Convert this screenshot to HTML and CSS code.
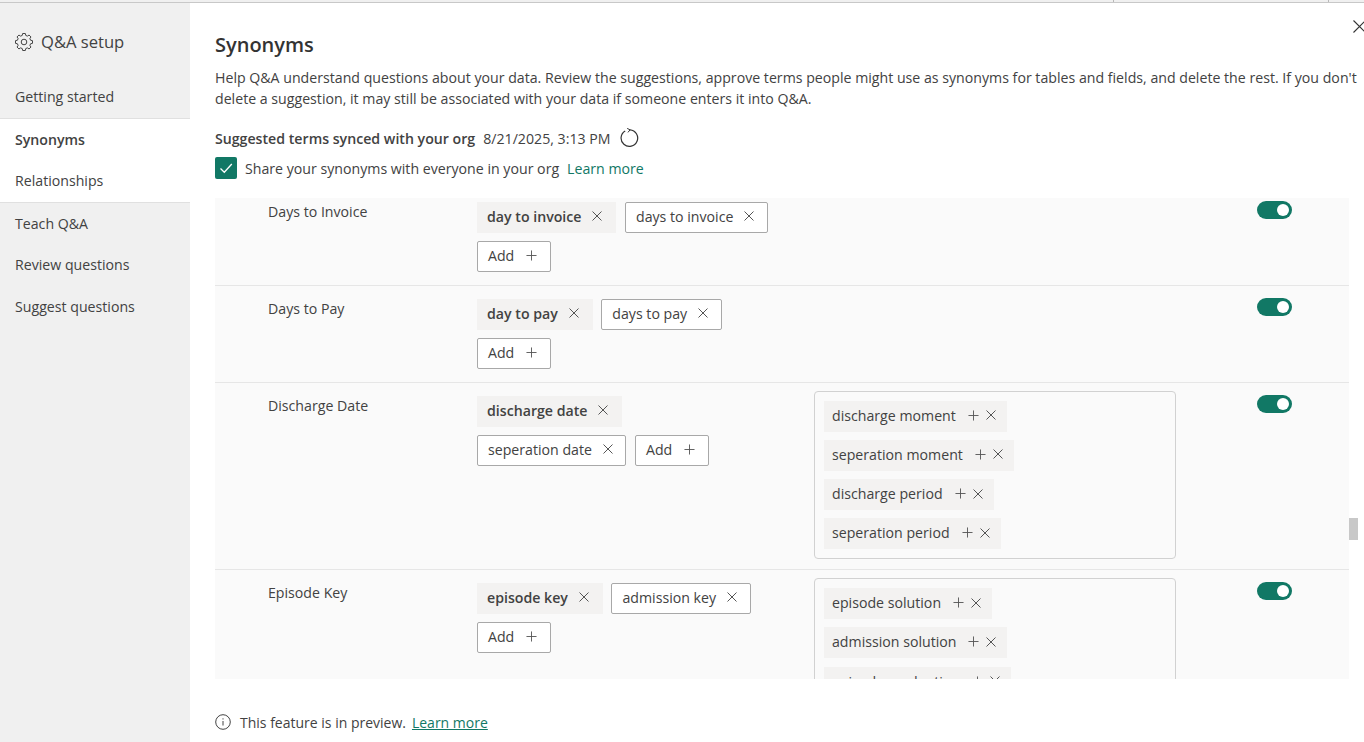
FILE: index.html
```html
<!DOCTYPE html>
<html lang="en">
<head>
<meta charset="utf-8">
<title>Q&amp;A setup</title>
<link rel="stylesheet" href="styles.css">
</head>
<body>
<div class="topstrip"></div>
<div class="app">
  <nav class="sidebar">
    <div class="side-head">
      <svg class="gear" viewBox="0 0 20 20" width="20" height="20" fill="none" stroke="#444" stroke-width="1"><path stroke-linejoin="round" d="M16.57 8.240L18.490 8.650V11.350L16.570 11.760L15.890 13.400L16.960 15.050L15.050 16.960L13.400 15.890L11.760 16.570L11.350 18.490H8.650L8.240 16.570L6.600 15.890L4.950 16.960L3.040 15.050L4.110 13.400L3.430 11.760L1.510 11.350V8.650L3.430 8.240L4.110 6.600L3.040 4.950L4.950 3.040L6.600 4.110L8.240 3.430L8.650 1.510H11.350L11.760 3.430L13.400 4.110L15.050 3.040L16.960 4.950L15.890 6.600Z"/><circle cx="10" cy="10" r="2.800"/></svg>
      <span class="side-title">Q&amp;A setup</span>
    </div>
    <a class="nav-item nav-first">Getting started</a>
    <div class="nav-active">
      <a class="nav-item nav-bold">Synonyms</a>
      <a class="nav-item">Relationships</a>
    </div>
    <a class="nav-item">Teach Q&amp;A</a>
    <a class="nav-item">Review questions</a>
    <a class="nav-item">Suggest questions</a>
  </nav>
  <main class="panel">
    <svg class="close" viewBox="0 0 13 13" width="13" height="13" stroke="#333" stroke-width="1.100"><path d="M.5.5l12 12M12.500.5l-12 12"/></svg>
    <h1 class="title">Synonyms</h1>
    <p class="intro">Help Q&amp;A understand questions about your data. Review the suggestions, approve terms people might use as synonyms for tables and fields, and delete the rest. If you don't delete a suggestion, it may still be associated with your data if someone enters it into Q&amp;A.</p>
    <div class="sync">
      <strong>Suggested terms synced with your org</strong>
      <span>8/21/2025, 3:13 PM</span>
      <svg viewBox="0 0 20 20" width="20" height="20" fill="none" stroke="#333" stroke-width="1.200"><path d="M6.200 2.900A8.300 8.300 0 1 0 11 1.800"/><path d="M8.200 .4L11 1.800 9 4.400" stroke-width="1"/></svg>
    </div>
    <div class="share">
      <span class="checkbox"><svg viewBox="0 0 22 22" width="22" height="22" fill="none" stroke="#fff" stroke-width="1.300"><path d="M5.500 11.500l3.800 3.800 7.500-8.300"/></svg></span>
      <span>Share your synonyms with everyone in your org</span>
      <a class="link">Learn more</a>
    </div>
    <div class="list-wrap">
      <div class="list">
        <section class="row row-first">
          <div class="row-label">Days to Invoice</div>
          <div class="terms">
            <div class="term-line">
              <span class="chip chip-main">day to invoice <svg class="x" viewBox="0 0 10 10"><path d="M.5.5l9 9M9.500.5l-9 9"/></svg></span>
              <span class="chip chip-box">days to invoice <svg class="x" viewBox="0 0 10 10"><path d="M.5.5l9 9M9.500.5l-9 9"/></svg></span>
            </div>
            <div class="term-line">
              <span class="chip chip-box">Add <svg class="p" viewBox="0 0 12 12"><path d="M6 .5v11M.5 6h11"/></svg></span>
            </div>
          </div>
          <div class="toggle"></div>
        </section>
        <section class="row">
          <div class="row-label">Days to Pay</div>
          <div class="terms">
            <div class="term-line">
              <span class="chip chip-main">day to pay <svg class="x" viewBox="0 0 10 10"><path d="M.5.5l9 9M9.500.5l-9 9"/></svg></span>
              <span class="chip chip-box">days to pay <svg class="x" viewBox="0 0 10 10"><path d="M.5.5l9 9M9.500.5l-9 9"/></svg></span>
            </div>
            <div class="term-line">
              <span class="chip chip-box">Add <svg class="p" viewBox="0 0 12 12"><path d="M6 .5v11M.5 6h11"/></svg></span>
            </div>
          </div>
          <div class="toggle"></div>
        </section>
        <section class="row row-tall">
          <div class="row-label">Discharge Date</div>
          <div class="terms">
            <div class="term-line">
              <span class="chip chip-main">discharge date <svg class="x" viewBox="0 0 10 10"><path d="M.5.5l9 9M9.500.5l-9 9"/></svg></span>
            </div>
            <div class="term-line">
              <span class="chip chip-box">seperation date <svg class="x" viewBox="0 0 10 10"><path d="M.5.5l9 9M9.500.5l-9 9"/></svg></span>
              <span class="chip chip-box">Add <svg class="p" viewBox="0 0 12 12"><path d="M6 .5v11M.5 6h11"/></svg></span>
            </div>
          </div>
          <div class="suggest">
            <span class="chip chip-sug">discharge moment <svg class="p" viewBox="0 0 12 12"><path d="M6 .5v11M.5 6h11"/></svg><svg class="x" viewBox="0 0 10 10"><path d="M.5.5l9 9M9.500.5l-9 9"/></svg></span>
            <span class="chip chip-sug">seperation moment <svg class="p" viewBox="0 0 12 12"><path d="M6 .5v11M.5 6h11"/></svg><svg class="x" viewBox="0 0 10 10"><path d="M.5.5l9 9M9.500.5l-9 9"/></svg></span>
            <span class="chip chip-sug">discharge period <svg class="p" viewBox="0 0 12 12"><path d="M6 .5v11M.5 6h11"/></svg><svg class="x" viewBox="0 0 10 10"><path d="M.5.5l9 9M9.500.5l-9 9"/></svg></span>
            <span class="chip chip-sug">seperation period <svg class="p" viewBox="0 0 12 12"><path d="M6 .5v11M.5 6h11"/></svg><svg class="x" viewBox="0 0 10 10"><path d="M.5.5l9 9M9.500.5l-9 9"/></svg></span>
          </div>
          <div class="toggle"></div>
        </section>
        <section class="row row-tall">
          <div class="row-label">Episode Key</div>
          <div class="terms">
            <div class="term-line">
              <span class="chip chip-main">episode key <svg class="x" viewBox="0 0 10 10"><path d="M.5.5l9 9M9.500.5l-9 9"/></svg></span>
              <span class="chip chip-box">admission key <svg class="x" viewBox="0 0 10 10"><path d="M.5.5l9 9M9.500.5l-9 9"/></svg></span>
            </div>
            <div class="term-line">
              <span class="chip chip-box">Add <svg class="p" viewBox="0 0 12 12"><path d="M6 .5v11M.5 6h11"/></svg></span>
            </div>
          </div>
          <div class="suggest">
            <span class="chip chip-sug">episode solution <svg class="p" viewBox="0 0 12 12"><path d="M6 .5v11M.5 6h11"/></svg><svg class="x" viewBox="0 0 10 10"><path d="M.5.5l9 9M9.500.5l-9 9"/></svg></span>
            <span class="chip chip-sug">admission solution <svg class="p" viewBox="0 0 12 12"><path d="M6 .5v11M.5 6h11"/></svg><svg class="x" viewBox="0 0 10 10"><path d="M.5.5l9 9M9.500.5l-9 9"/></svg></span>
            <span class="chip chip-sug">episode graduation <svg class="p" viewBox="0 0 12 12"><path d="M6 .5v11M.5 6h11"/></svg><svg class="x" viewBox="0 0 10 10"><path d="M.5.5l9 9M9.500.5l-9 9"/></svg></span>
          </div>
          <div class="toggle"></div>
        </section>
      </div>
      <div class="thumb"></div>
    </div>
    <div class="preview">
      <svg class="info" viewBox="0 0 16 16" width="16" height="16" fill="none" stroke="#444" stroke-width="1"><circle cx="8" cy="8" r="7.300"/><path d="M8 7v4.500M8 4.300v1.200"/></svg>
      <span>This feature is in preview.</span>
      <a class="link link-under">Learn more</a>
    </div>
  </main>
</div>
</body>
</html>
```
FILE: styles.css
```css
* { box-sizing: border-box; }
html, body { margin: 0; height: 100%; overflow: hidden; }
body { font-family: "Open Sans", "Noto Sans", sans-serif; font-size: 14.16px; color: #424242; background: #fff; display: flex; flex-direction: column; }
.topstrip { height: 3px; flex: none; border-bottom: 1px solid #c8c8c8; background-color: #f0f0f0; background-image: linear-gradient(#b8b8b8, #b8b8b8), linear-gradient(#b8b8b8, #b8b8b8); background-size: 1px 100%, 1px 100%; background-position: 1113px 0, 1328px 0; background-repeat: no-repeat; }
.app { flex: 1; display: flex; min-height: 0; }
.sidebar { width: 190px; background: #f0f0f0; flex: none; }
.side-head { display: flex; align-items: center; gap: 7px; padding: 16px 0 0 14px; height: 61px; }
.side-title { font-size: 16.600px; }
.nav-item { display: block; padding-left: 15px; height: 41.500px; line-height: 41.500px; }
.nav-first { margin-top: 12px; }
.nav-active { background: #fff; border-top: 1px solid #e0e0e0; border-bottom: 1px solid #e0e0e0; }
.nav-bold { font-weight: 600; }
.panel { flex: 1; position: relative; padding: 27px 0 0 25px; min-width: 0; background: #fff; }
.close { position: absolute; right: -2px; top: 17px; }
.title { margin: 0; font-size: 20px; font-weight: 600; line-height: 30px; color: #333; }
.intro { margin: 7px 0 0; width: 1148px; line-height: 21px; }
.sync { display: flex; align-items: center; gap: 8px; margin-top: 17px; height: 24px; }
.sync strong { font-weight: 600; }
.share { display: flex; align-items: center; gap: 8px; margin-top: 7px; height: 22px; }
.checkbox { width: 22px; height: 22px; background: #117865; border-radius: 2px; flex: none; }
.checkbox svg { display: block; }
.link { color: #117865; }
.link-under { text-decoration: underline; }
.list-wrap { position: relative; margin-top: 19px; height: 481px; }
.list { width: 1134px; height: 481px; overflow: hidden; background: #fafafa; }
.row { position: relative; display: flex; align-items: flex-start; padding: 13px 0 9px 53px; border-bottom: 1px solid #e6e6e6; height: 97px; }
.row-tall { height: auto; }
.row-first { margin-top: -9px; }
.row-label { width: 209px; flex: none; line-height: 20px; }
.terms { width: 337px; flex: none; display: flex; flex-direction: column; gap: 8.500px; }
.term-line { display: flex; gap: 8.500px; }
.chip { display: inline-flex; align-items: center; height: 30.500px; padding: 0 12.500px 2px 10px; white-space: nowrap; }
.chip-main { background: #f3f2f1; font-weight: 600; padding-right: 14px; }
.chip-box { background: #fff; border: 1px solid #a8a8a8; border-radius: 2px; }
.x { width: 10px; height: 10px; margin-left: 11px; stroke: #555; stroke-width: 1; fill: none; flex: none; }
.p { width: 11px; height: 11px; margin-left: 12px; stroke: #555; stroke-width: 1; fill: none; flex: none; }
.chip-sug { background: #f3f2f1; padding: 0 11px 2px 8px; height: 31px; }
.chip-sug .x { margin-left: 7px; }
.suggest { width: 362px; flex: none; display: flex; flex-direction: column; align-items: flex-start; gap: 8.300px; padding: 9px; border: 1px solid #d1d1d1; border-radius: 4px; margin-top: -5px; margin-bottom: 1px; height: 168px; }
.toggle { position: absolute; left: 1042px; top: 12px; width: 35px; height: 18px; background: #117865; border-radius: 9px; }
.toggle::after { content: ""; position: absolute; right: 3px; top: 3px; width: 12px; height: 12px; border-radius: 50%; background: #fff; }
.thumb { position: absolute; left: 1134px; top: 320px; width: 9px; height: 22px; background: #c8c8c8; }
.preview { display: flex; align-items: center; gap: 6px; margin-top: 33px; height: 20px; font-size: 14px; }
.info { margin-right: 3px; }
```
